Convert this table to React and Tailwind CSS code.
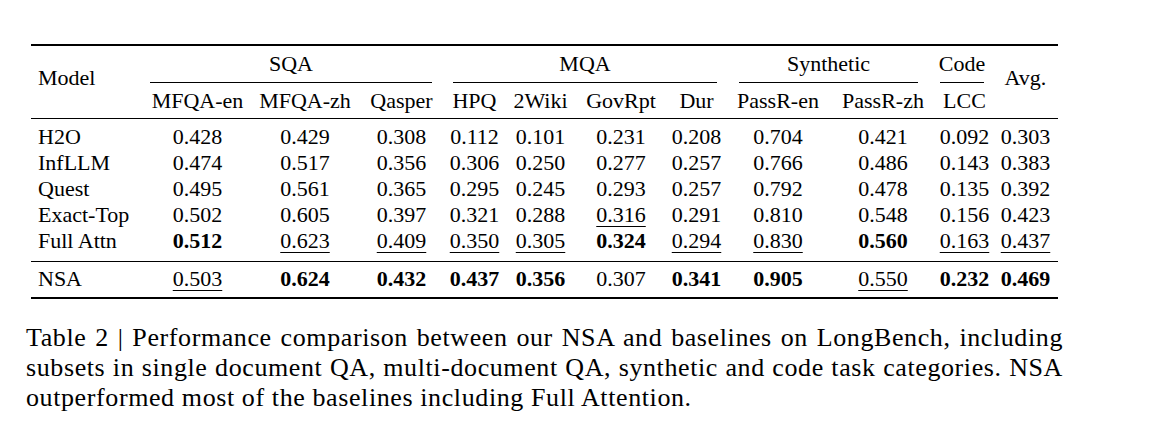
import React from 'react';

const serif = { fontFamily: '"Liberation Serif", "Times New Roman", serif' };

const subHeads = ['MFQA-en', 'MFQA-zh', 'Qasper', 'HPQ', '2Wiki', 'GovRpt', 'Dur', 'PassR-en', 'PassR-zh', 'LCC'];

// b: bold, u: underlined
const rows = [
    ['H2O', ['0.428', '0.429', '0.308', '0.112', '0.101', '0.231', '0.208', '0.704', '0.421', '0.092', '0.303']],
    ['InfLLM', ['0.474', '0.517', '0.356', '0.306', '0.250', '0.277', '0.257', '0.766', '0.486', '0.143', '0.383']],
    ['Quest', ['0.495', '0.561', '0.365', '0.295', '0.245', '0.293', '0.257', '0.792', '0.478', '0.135', '0.392']],
    ['Exact-Top', ['0.502', '0.605', '0.397', '0.321', '0.288', 'u:0.316', '0.291', '0.810', '0.548', '0.156', '0.423']],
    ['Full Attn', ['b:0.512', 'u:0.623', 'u:0.409', 'u:0.350', 'u:0.305', 'b:0.324', 'u:0.294', 'u:0.830', 'b:0.560', 'u:0.163', 'u:0.437']],
];

const nsa = ['NSA', ['u:0.503', 'b:0.624', 'b:0.432', 'b:0.437', 'b:0.356', '0.307', 'b:0.341', 'b:0.905', 'u:0.550', 'b:0.232', 'b:0.469']];

const cols = 'grid grid-cols-[114px_105px_110px_83px_63px_69px_92px_59px_104px_106px_57px_65px]';

function Cell({ v }) {
    let text = v;
    let cls = '';
    if (v.startsWith('b:')) { text = v.slice(2); cls = 'font-bold'; }
    if (v.startsWith('u:')) { text = v.slice(2); cls = 'underline decoration-1 underline-offset-[4px]'; }
    return (
        <div className="flex items-center justify-center h-[26px]">
            <span className={cls}>{text}</span>
        </div>
    );
}

function Row({ row }) {
    const [name, vals] = row;
    return (
        <div className={cols}>
            <div className="flex items-center h-[26px] pl-[7px]">{name}</div>
            {vals.map((v, i) => <Cell key={i} v={v} />)}
        </div>
    );
}

export default function App() {
    return (
        <div className="bg-white w-[1172px] h-[426px] text-black" style={serif}>
            <div className="pt-[44px] pl-[31px]">
                <div className="w-[1027px] text-[22px] leading-[24px]">
                    <div className="h-[2px] bg-black" />
                    <div className={cols}>
                        <div className="row-span-2 pl-[7px] pt-[20px]">Model</div>
                        <div className="col-span-3 ml-[5px] mr-[11px] h-[37px] flex items-center justify-center border-b border-black">SQA</div>
                        <div className="col-span-4 ml-[10px] mr-[9px] h-[37px] flex items-center justify-center border-b border-black">MQA</div>
                        <div className="col-span-2 ml-[13px] mr-[18px] h-[37px] flex items-center justify-center border-b border-black">Synthetic</div>
                        <div className="ml-[4px] mr-[9px] h-[37px] flex items-center justify-center border-b border-black">Code</div>
                        <div className="row-span-2 pt-[20px] text-center">Avg.</div>
                        {subHeads.map((h) => (
                            <div key={h} className="h-[35px] flex items-center justify-center whitespace-nowrap">{h}</div>
                        ))}
                    </div>
                    <div className="h-px bg-black" />
                    <div className="pt-[5px] pb-[7px]">
                        {rows.map((r) => <Row key={r[0]} row={r} />)}
                    </div>
                    <div className="h-px bg-black" />
                    <div className="pt-[4px] pb-[5px]">
                        <Row row={nsa} />
                    </div>
                    <div className="h-[2px] bg-black" />
                </div>
            </div>
            <div className="ml-[26px] mt-[24px] w-[1037px] text-[26px] leading-[30px] tracking-[0.6px]">
                <div className="text-justify [text-align-last:justify]">Table 2 | Performance comparison between our NSA and baselines on LongBench, including</div>
                <div className="text-justify [text-align-last:justify]">subsets in single document QA, multi-document QA, synthetic and code task categories. NSA</div>
                <div>outperformed most of the baselines including Full Attention.</div>
            </div>
        </div>
    );
}
